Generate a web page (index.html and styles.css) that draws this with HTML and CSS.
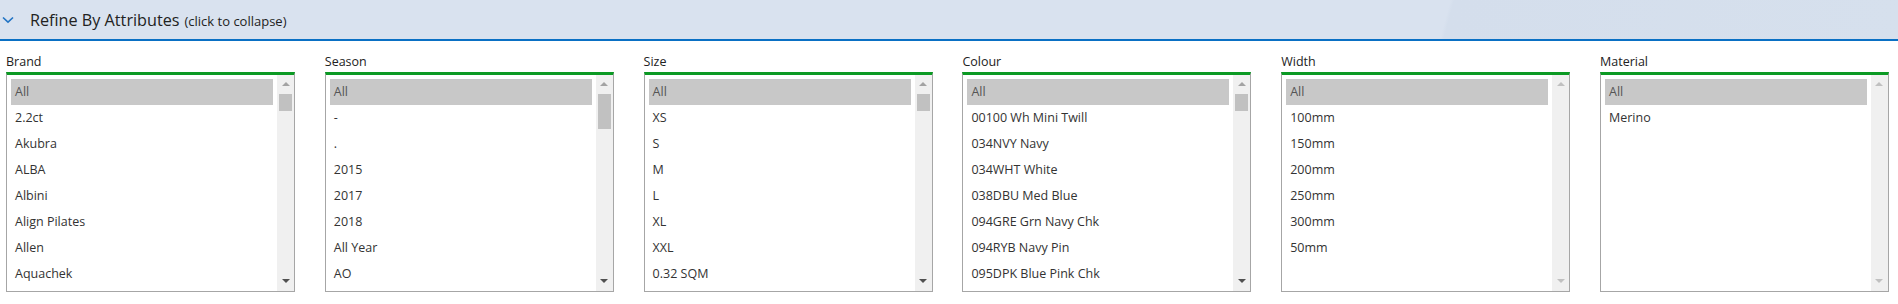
FILE: index.html
```html
<!DOCTYPE html>
<html lang="en">
<head>
    <meta charset="UTF-8">
    <meta name="viewport" content="width=device-width, initial-scale=1.0">
    <title>Refine By Attributes</title>
    <link rel="stylesheet" href="styles.css">
</head>
<body>
    <div class="refine-header">
        <svg class="chevron" width="12" height="8" viewBox="0 0 12 8"><path d="M1 1.5 L6 6.2 L11 1.5" fill="none" stroke="#2274c4" stroke-width="1.6"/></svg>
        <span class="refine-title">Refine By Attributes</span>
        <span class="refine-hint">(click to collapse)</span>
    </div>

    <div class="filters">
        <div class="filter">
            <div class="filter-label">Brand</div>
            <div class="listbox">
                <ul class="items">
                    <li class="selected">All</li>
                    <li>2.2ct</li>
                    <li>Akubra</li>
                    <li>ALBA</li>
                    <li>Albini</li>
                    <li>Align Pilates</li>
                    <li>Allen</li>
                    <li>Aquachek</li>
                </ul>
                <div class="scrollbar">
                    <span class="arrow up"></span>
                    <div class="track"><div class="thumb" style="height: 17px"></div></div>
                    <span class="arrow down"></span>
                </div>
            </div>
        </div>

        <div class="filter">
            <div class="filter-label">Season</div>
            <div class="listbox">
                <ul class="items">
                    <li class="selected">All</li>
                    <li>-</li>
                    <li>.</li>
                    <li>2015</li>
                    <li>2017</li>
                    <li>2018</li>
                    <li>All Year</li>
                    <li>AO</li>
                </ul>
                <div class="scrollbar">
                    <span class="arrow up"></span>
                    <div class="track"><div class="thumb" style="height: 35px"></div></div>
                    <span class="arrow down"></span>
                </div>
            </div>
        </div>

        <div class="filter">
            <div class="filter-label">Size</div>
            <div class="listbox">
                <ul class="items">
                    <li class="selected">All</li>
                    <li>XS</li>
                    <li>S</li>
                    <li>M</li>
                    <li>L</li>
                    <li>XL</li>
                    <li>XXL</li>
                    <li>0.32 SQM</li>
                </ul>
                <div class="scrollbar">
                    <span class="arrow up"></span>
                    <div class="track"><div class="thumb" style="height: 17px"></div></div>
                    <span class="arrow down"></span>
                </div>
            </div>
        </div>

        <div class="filter">
            <div class="filter-label">Colour</div>
            <div class="listbox">
                <ul class="items">
                    <li class="selected">All</li>
                    <li>00100 Wh Mini Twill</li>
                    <li>034NVY Navy</li>
                    <li>034WHT White</li>
                    <li>038DBU Med Blue</li>
                    <li>094GRE Grn Navy Chk</li>
                    <li>094RYB Navy Pin</li>
                    <li>095DPK Blue Pink Chk</li>
                </ul>
                <div class="scrollbar">
                    <span class="arrow up"></span>
                    <div class="track"><div class="thumb" style="height: 17px"></div></div>
                    <span class="arrow down"></span>
                </div>
            </div>
        </div>

        <div class="filter">
            <div class="filter-label">Width</div>
            <div class="listbox">
                <ul class="items">
                    <li class="selected">All</li>
                    <li>100mm</li>
                    <li>150mm</li>
                    <li>200mm</li>
                    <li>250mm</li>
                    <li>300mm</li>
                    <li>50mm</li>
                </ul>
                <div class="scrollbar disabled">
                    <span class="arrow up"></span>
                    <div class="track"></div>
                    <span class="arrow down"></span>
                </div>
            </div>
        </div>

        <div class="filter">
            <div class="filter-label">Material</div>
            <div class="listbox">
                <ul class="items">
                    <li class="selected">All</li>
                    <li>Merino</li>
                </ul>
                <div class="scrollbar disabled">
                    <span class="arrow up"></span>
                    <div class="track"></div>
                    <span class="arrow down"></span>
                </div>
            </div>
        </div>
    </div>
</body>
</html>
```

FILE: styles.css
```css
body { margin: 0; background: #fff; font-family: "Open Sans", "Noto Sans", sans-serif; color: #333; }

.refine-header { height: 39px; display: flex; align-items: center; padding-left: 2px; background: linear-gradient(105deg, #d9e2ef 0%, #d9e2ef 76%, #d4deec 76.2%, #d6e0ed 100%); border-bottom: 2px solid #0a70c4; }
.chevron { margin-right: 16px; margin-top: 1px; }
.refine-title { font-size: 16.2px; color: #222; }
.refine-hint { font-size: 13px; color: #222; margin-left: 5px; margin-top: 2px; }

.filters { display: grid; grid-template-columns: repeat(6, 289px); column-gap: 29.8px; padding: 12px 6px 0; }
.filter-label { font-size: 12.5px; line-height: 17px; color: #222; margin-bottom: 2px; }

.listbox { display: flex; height: 216px; border: 1px solid #a6a6a6; border-top: 3px solid #0c9a24; }
.items { flex: 1; list-style: none; margin: 0; padding: 4px 4px 0 4px; }
.items li { height: 26px; line-height: 26px; padding-left: 4px; font-size: 12.5px; color: #333; white-space: nowrap; }
.items li.selected { background: #c8c8c8; color: #555; }

.scrollbar { width: 17px; background: #f0f0f0; display: flex; flex-direction: column; align-items: center; }
.track { flex: 1; width: 13px; padding-top: 2px; }
.thumb { background: #c1c1c1; }
.arrow { width: 0; height: 0; border-left: 4px solid transparent; border-right: 4px solid transparent; }
.arrow.up { border-bottom: 4px solid #a3a3a3; margin-top: 7px; margin-bottom: 6px; }
.arrow.down { border-top: 4px solid #505050; margin-top: 4px; margin-bottom: 8px; }
.scrollbar.disabled .arrow.up { border-bottom-color: #c0c0c0; }
.scrollbar.disabled .arrow.down { border-top-color: #c0c0c0; }
```
